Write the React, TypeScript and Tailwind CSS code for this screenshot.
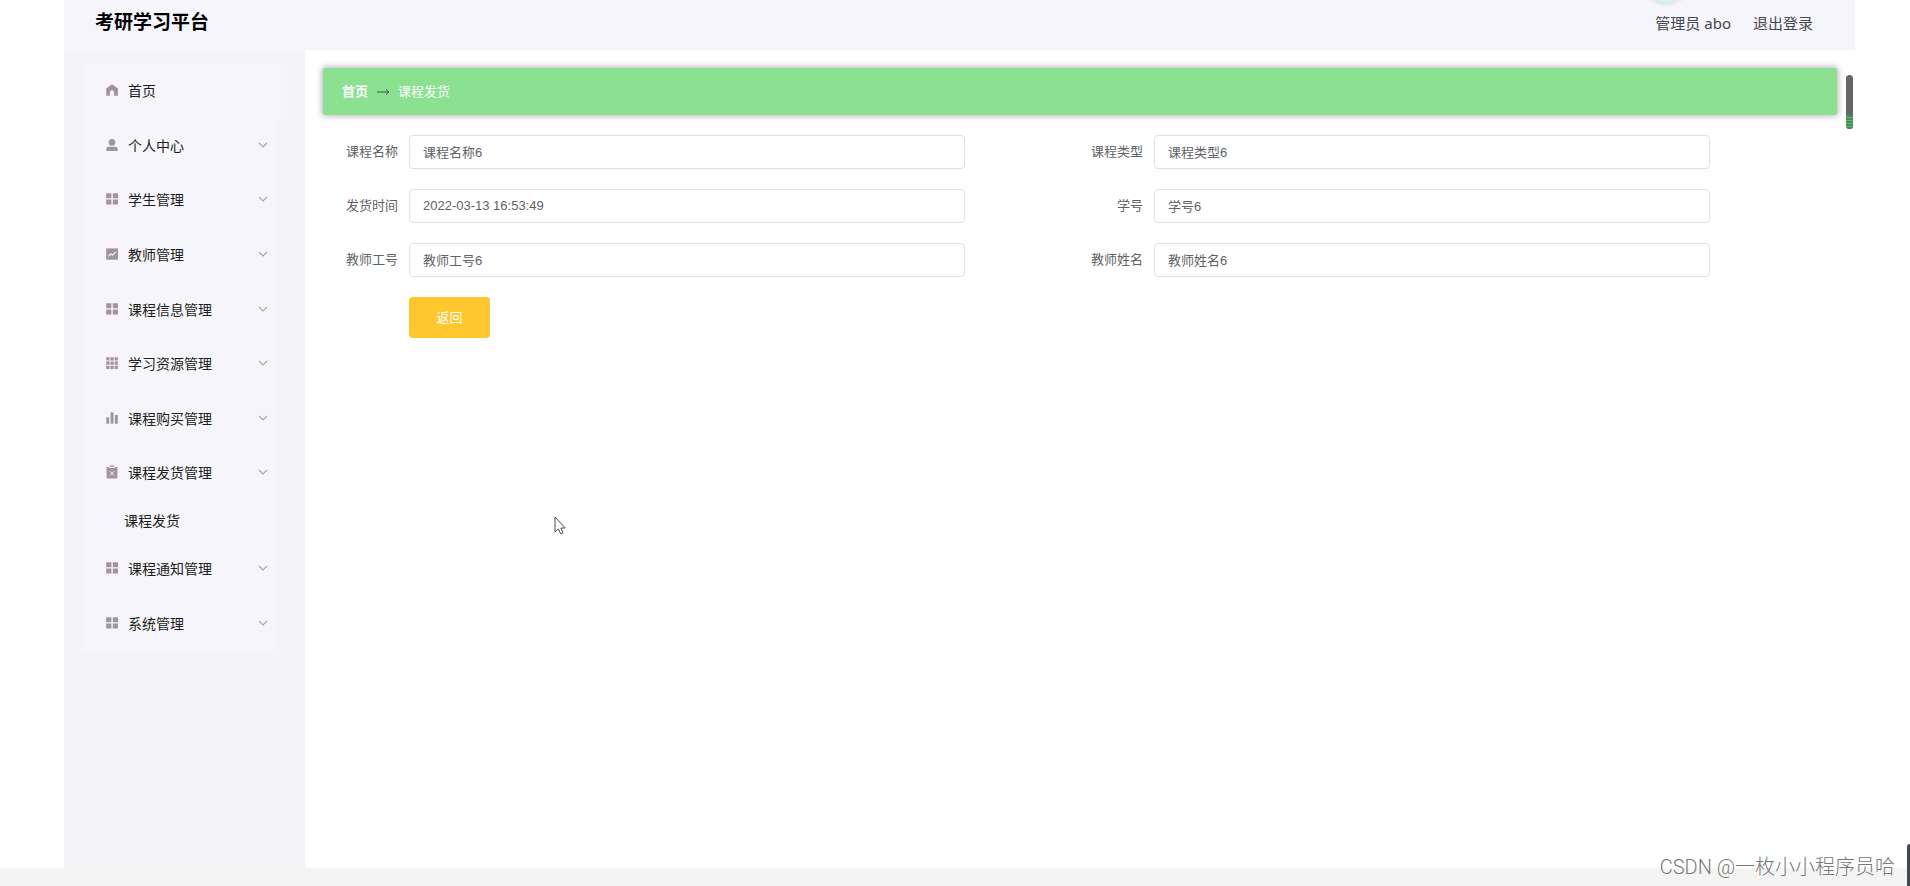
import type { ReactNode } from "react";

type IconName = "home" | "user" | "menu" | "marketing" | "grid" | "data" | "release";

const ICONS: Record<IconName, ReactNode> = {
  home: <path d="M6 0.2 12 4.6V11.8H8.1V8.4a2.1 2.1 0 0 0-4.2 0v3.4H0.2V4.6Z" />,
  user: (
    <>
      <circle cx="6" cy="3.4" r="3.3" />
      <path d="M0.3 12V10a2.4 2.4 0 0 1 2.4-2.2h6.6A2.4 2.4 0 0 1 11.7 10v2Z" />
    </>
  ),
  menu: <path d="M0.2 0.2h5.2v5H0.2ZM6.8 0.2h5.2v5H6.8ZM0.2 6.6h5.2v5H0.2ZM6.8 6.6h5.2v5H6.8Z" />,
  marketing: (
    <>
      <rect x="0.2" y="0.4" width="11.8" height="11.3" />
      <path d="M2.2 8.4 4.6 5.8 6.4 7.2 9.8 3.8" fill="none" stroke="#f5f5fb" strokeWidth="1.1" />
    </>
  ),
  grid: (
    <path d="M0.2 0.3h3.3v3.2H0.2ZM4.4 0.3h3.3v3.2H4.4ZM8.6 0.3h3.3v3.2H8.6ZM0.2 4.5h3.3v3.2H0.2ZM4.4 4.5h3.3v3.2H4.4ZM8.6 4.5h3.3v3.2H8.6ZM0.2 8.7h3.3v3.2H0.2ZM4.4 8.7h3.3v3.2H4.4ZM8.6 8.7h3.3v3.2H8.6Z" />
  ),
  data: <path d="M0.3 5.2h2.9v6.6H0.3ZM4.6 0.2h2.9v11.6H4.6ZM8.9 3h2.9v8.8H8.9Z" />,
  release: (
    <>
      <path d="M3.6-0.6h4.8v1.4H3.6ZM0.6 1.1h2.2v1h6.4v-1h2.2v11.4H0.6Z" />
      <path d="M3.9 5.2 8.1 9.4M8.1 5.2 3.9 9.4" fill="none" stroke="#f5f5fb" strokeWidth="1" />
    </>
  ),
};

function MenuIcon({ name }: { name: IconName }) {
  return (
    <svg viewBox="0 0 12 12" className="mb-0.5 size-3 shrink-0 overflow-visible fill-[#a293a0]" aria-hidden="true">
      {ICONS[name]}
    </svg>
  );
}

function Chevron() {
  return (
    <svg viewBox="0 0 10 6" className="mb-0.5 ml-auto h-1.5 w-2.5 fill-none stroke-[#a9a5ad]" aria-hidden="true">
      <path d="M1 1l4 4 4-4" strokeWidth="1.1" />
    </svg>
  );
}

interface Group {
  label: string;
  icon: IconName;
  child?: string;
}

const GROUPS: Group[] = [
  { label: "个人中心", icon: "user" },
  { label: "学生管理", icon: "menu" },
  { label: "教师管理", icon: "marketing" },
  { label: "课程信息管理", icon: "menu" },
  { label: "学习资源管理", icon: "grid" },
  { label: "课程购买管理", icon: "data" },
  { label: "课程发货管理", icon: "release", child: "课程发货" },
  { label: "课程通知管理", icon: "menu" },
  { label: "系统管理", icon: "menu" },
];

const FIELDS = [
  { id: "courseName", label: "课程名称", value: "课程名称6" },
  { id: "courseType", label: "课程类型", value: "课程类型6" },
  { id: "shipTime", label: "发货时间", value: "2022-03-13 16:53:49" },
  { id: "studentNo", label: "学号", value: "学号6" },
  { id: "teacherNo", label: "教师工号", value: "教师工号6" },
  { id: "teacherName", label: "教师姓名", value: "教师姓名6" },
];

function Header() {
  return (
    <header className="relative flex h-[50px] items-center justify-between overflow-hidden bg-[#f5f5fb] pr-[42px] pb-1 pl-[31px]">
      <h1 className="text-[19px] leading-6 font-bold text-black">考研学习平台</h1>
      <div className="flex gap-[22px] font-['Noto_Sans','Noto_Sans_CJK_SC',sans-serif] text-[15px] leading-6 text-[#46464c]">
        <span>管理员 abo</span>
        <a href="#logout">退出登录</a>
      </div>
      <div className="absolute -top-10 right-[168px] size-[42px] rounded-full bg-[#d3f5fb] shadow-[0_0_4px_2px_#d9dde6]" />
    </header>
  );
}

function Sidebar() {
  return (
    <aside className="w-[241px] shrink-0 bg-[#f4f4f6] px-[18px] pt-3.5">
      <nav>
        <ul className="flex min-h-[587px] flex-col text-sm text-[#1d1d20]">
          <li className="flex flex-1 bg-[#f5f5fb]">
            <a href="#home" className="flex flex-1 items-center gap-2.5 pl-6">
              <MenuIcon name="home" />
              首页
            </a>
          </li>
          {GROUPS.map((group) => (
            <li key={group.label} className="contents">
              <button type="button" className="mr-2.5 flex flex-1 items-center gap-2.5 bg-[#f5f5fb] pr-[9px] pl-6">
                <MenuIcon name={group.icon} />
                {group.label}
                <Chevron />
              </button>
              {group.child && (
                <a href="#shipping" className="mr-2.5 flex h-[41px] items-center bg-[#f5f5fb] pl-[42px]">
                  {group.child}
                </a>
              )}
            </li>
          ))}
        </ul>
      </nav>
    </aside>
  );
}

function Main() {
  return (
    <main className="relative min-w-0 flex-1 bg-white px-[18px] pt-[18px]">
      <nav className="flex h-[47px] items-center gap-2 rounded-xs bg-[#8be092] pl-[19px] text-[13px] text-white shadow-[0_0_6px_1px_rgba(0,0,0,0.3)]">
        <a href="#home" className="font-bold">
          首页
        </a>
        <svg viewBox="0 0 14 8" className="h-2 w-3.5 fill-none stroke-[#3f5a44]" aria-hidden="true">
          <path d="M1 4H13M10 1.5 13 4 10 6.5" />
        </svg>
        <span>课程发货</span>
      </nav>
      <form className="mt-5 px-3 text-[13px] text-[#606266]">
        <div className="grid grid-cols-2 gap-y-5">
          {FIELDS.map((field) => (
            <div key={field.id} className="flex items-center pr-[115px]">
              <label htmlFor={field.id} className="w-[74px] shrink-0 pr-[11px] text-right">
                {field.label}
              </label>
              <input
                id={field.id}
                readOnly
                defaultValue={field.value}
                className="h-[34px] min-w-0 flex-1 rounded-sm border border-[#dfe1e6] bg-white px-[13px] pb-0.5 outline-none"
              />
            </div>
          ))}
        </div>
        <button type="button" className="mt-5 ml-[74px] h-[41px] w-[81px] rounded-sm bg-[#ffc62d] text-white">
          返回
        </button>
      </form>
      <div className="absolute top-[25px] right-0.5 flex h-[54px] w-[7px] flex-col justify-end overflow-hidden rounded-full bg-[#666668]">
        <div className="h-3.5 bg-[repeating-linear-gradient(0deg,#4a8a5c_0,#4a8a5c_2px,#5cba76_2px,#5cba76_3px)]" />
      </div>
      <svg viewBox="0 0 12 19" className="absolute top-[466px] left-[249px] h-[19px] w-3" aria-hidden="true">
        <path
          d="M1 1V16L4.4 12.9 6.6 17.8 9 16.8 6.9 12H11.3Z"
          fill="#fff"
          stroke="#4b4b52"
          strokeWidth="1"
        />
      </svg>
    </main>
  );
}

export default function App() {
  return (
    <div className="relative flex min-h-screen flex-col overflow-hidden bg-white font-['Liberation_Sans','Noto_Sans_CJK_SC',sans-serif]">
      <div className="mr-[55px] ml-16 flex flex-1 flex-col">
        <Header />
        <div className="flex flex-1">
          <Sidebar />
          <Main />
        </div>
      </div>
      <footer className="h-[18px] bg-[#f4f4f4]" />
      <p className="absolute right-[15px] bottom-[5px] font-['Roboto','Noto_Sans_CJK_SC',sans-serif] text-xl leading-7 font-light text-[#777777] [text-shadow:-1px_-1px_0_#fff]">
        CSDN @一枚小小程序员哈
      </p>
      <div className="absolute right-0 bottom-0 h-[42px] w-[3px] rounded-tl-sm bg-[#454852]" />
    </div>
  );
}
